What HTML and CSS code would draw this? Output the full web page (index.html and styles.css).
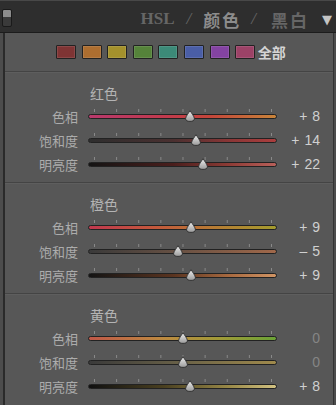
FILE: index.html
```html
<!DOCTYPE html>
<html lang="zh">

<head>
    <meta charset="UTF-8">
    <meta name="viewport" content="width=device-width, initial-scale=1.0">
    <title>HSL / 颜色 / 黑白</title>
    <link rel="stylesheet" href="styles.css">
</head>

<body>
    <div class="panel">
        <div class="header">
            <div class="toggle"></div>
            <div class="tabs">
                <span class="tab hsl">HSL</span>
                <span class="sep">/</span>
                <span class="tab active">颜色</span>
                <span class="sep sep-last">/</span>
                <span class="tab">黑白</span>
                <span class="arrow">▼</span>
            </div>
        </div>

        <div class="body">
            <div class="swatches">
                <span class="sw sw-red"></span>
                <span class="sw sw-orange"></span>
                <span class="sw sw-yellow"></span>
                <span class="sw sw-green"></span>
                <span class="sw sw-aqua"></span>
                <span class="sw sw-blue"></span>
                <span class="sw sw-purple"></span>
                <span class="sw sw-magenta"></span>
                <span class="all">全部</span>
            </div>

            <div class="section">
                <div class="title">红色</div>
                <div class="row">
                    <span class="label">色相</span>
                    <div class="slider"><div class="track red-hue"></div><svg class="thumb" style="left: 54%" viewBox="0 0 10 12"><use href="#thumb"/></svg></div>
                    <span class="value">+ 8</span>
                </div>
                <div class="row">
                    <span class="label">饱和度</span>
                    <div class="slider"><div class="track red-sat"></div><svg class="thumb" style="left: 57%" viewBox="0 0 10 12"><use href="#thumb"/></svg></div>
                    <span class="value">+ 14</span>
                </div>
                <div class="row">
                    <span class="label">明亮度</span>
                    <div class="slider"><div class="track red-lum"></div><svg class="thumb" style="left: 61%" viewBox="0 0 10 12"><use href="#thumb"/></svg></div>
                    <span class="value">+ 22</span>
                </div>
            </div>

            <div class="section">
                <div class="title">橙色</div>
                <div class="row">
                    <span class="label">色相</span>
                    <div class="slider"><div class="track orange-hue"></div><svg class="thumb" style="left: 54.5%" viewBox="0 0 10 12"><use href="#thumb"/></svg></div>
                    <span class="value">+ 9</span>
                </div>
                <div class="row">
                    <span class="label">饱和度</span>
                    <div class="slider"><div class="track orange-sat"></div><svg class="thumb" style="left: 47.5%" viewBox="0 0 10 12"><use href="#thumb"/></svg></div>
                    <span class="value">– 5</span>
                </div>
                <div class="row">
                    <span class="label">明亮度</span>
                    <div class="slider"><div class="track orange-lum"></div><svg class="thumb" style="left: 54.5%" viewBox="0 0 10 12"><use href="#thumb"/></svg></div>
                    <span class="value">+ 9</span>
                </div>
            </div>

            <div class="section">
                <div class="title">黄色</div>
                <div class="row">
                    <span class="label">色相</span>
                    <div class="slider"><div class="track yellow-hue"></div><svg class="thumb" style="left: 50%" viewBox="0 0 10 12"><use href="#thumb"/></svg></div>
                    <span class="value zero">0</span>
                </div>
                <div class="row">
                    <span class="label">饱和度</span>
                    <div class="slider"><div class="track yellow-sat"></div><svg class="thumb" style="left: 50%" viewBox="0 0 10 12"><use href="#thumb"/></svg></div>
                    <span class="value zero">0</span>
                </div>
                <div class="row">
                    <span class="label">明亮度</span>
                    <div class="slider"><div class="track yellow-lum"></div><svg class="thumb" style="left: 54%" viewBox="0 0 10 12"><use href="#thumb"/></svg></div>
                    <span class="value">+ 8</span>
                </div>
            </div>
        </div>
    </div>

    <!-- shared slider thumb -->
    <svg width="0" height="0" class="defs">
        <defs>
            <linearGradient id="thumb-fill" x1="0" y1="0" x2="0" y2="1">
                <stop offset="0" stop-color="#f0f0f0"/>
                <stop offset="1" stop-color="#9a9a9a"/>
            </linearGradient>
            <path id="thumb" d="M5 0.6 C6 2.5 9.4 6.5 9.4 8.6 C9.4 10.6 7.6 11.4 5 11.4 C2.4 11.4 0.6 10.6 0.6 8.6 C0.6 6.5 4 2.5 5 0.6 Z" fill="url(#thumb-fill)" stroke="#2a2a2a" stroke-width="0.9"/>
        </defs>
    </svg>
</body>

</html>
```

FILE: styles.css
```css
body {
    margin: 0;
    background: #4c4c4c;
    font-family: "Noto Sans CJK SC", "Liberation Sans", sans-serif;
}

.panel {
    width: 336px;
    height: 405px;
    overflow: hidden;
    background: #4c4c4c;
}

/* header */

.header {
    height: 31px;
    background: #2e2e2e;
    border-top: 1px solid #484848;
    border-bottom: 1px solid #1c1c1c;
    display: flex;
    align-items: center;
    padding: 0 4px 0 2px;
}

.toggle {
    width: 8px;
    height: 16px;
    border: 1px solid #1a1a1a;
    border-radius: 2px;
    background: linear-gradient(#8c8c8c 0 45%, #3a3a3a 45%);
    margin-top: 2px;
}

.tabs {
    margin-left: auto;
    display: flex;
    align-items: center;
    padding-top: 5px;
    color: #666;
    font-size: 17px;
}

.tab {
    letter-spacing: 2px;
    font-weight: bold;
}

.hsl {
    font-family: "Liberation Serif", serif;
    letter-spacing: 0;
}

.tab.active {
    color: #8c8c8c;
}

.sep {
    font-family: "Liberation Serif", serif;
    font-style: italic;
    margin: 0 12px;
}

.sep-last {
    margin: 0 15px 0 10px;
}

.arrow {
    color: #c4c4c4;
    font-size: 13px;
    margin-left: 13px;
    font-family: "DejaVu Sans", sans-serif;
}

/* body */

.body {
    height: 372px;
    margin-left: 3px;
    margin-right: 2px;
    background: #575757;
    border-left: 2px solid #2a2a2a;
    border-right: 1px solid #333;
}

.swatches {
    display: flex;
    align-items: center;
    gap: 5.6px;
    height: 14px;
    padding: 12px 0 12px 51px;
}

.sw {
    width: 18px;
    height: 12px;
    border: 1px solid #222;
    border-radius: 1px;
    box-shadow: inset 0 0 0 1px rgba(255, 255, 255, 0.1);
}

.sw-red { background: #7f3434; }
.sw-orange { background: #ad6e30; }
.sw-yellow { background: #a4912c; }
.sw-green { background: #55833a; }
.sw-aqua { background: #3c8a78; }
.sw-blue { background: #4a5ea6; }
.sw-purple { background: #8443a2; }
.sw-magenta { background: #9c4267; }

.all {
    margin-left: -3px;
    color: #d4d4d4;
    font-size: 14px;
    font-weight: bold;
    line-height: 14px;
}

/* sections */

.section {
    border-top: 1px solid #444;
    box-shadow: inset 0 1px #5e5e5e;
    padding: 10px 0 6px;
}

.title {
    height: 22px;
    line-height: 22px;
    padding-left: 85px;
    color: #b4b4b4;
    font-size: 14px;
}

.row {
    display: grid;
    grid-template-columns: 83px 189px 43px;
    height: 24px;
    align-items: center;
}

.label {
    text-align: right;
    padding-right: 10px;
    color: #acacac;
    font-size: 13px;
}

.value {
    text-align: right;
    color: #d0d0d0;
    font-family: "Liberation Sans", sans-serif;
    font-size: 14px;
    word-spacing: 1px;
}

.value.zero {
    color: #858585;
}

.slider {
    position: relative;
    height: 24px;
    display: flex;
    align-items: center;
}

.slider::before {
    content: "";
    position: absolute;
    left: 6px;
    top: 5px;
    width: 178px;
    height: 3px;
    background-image: linear-gradient(90deg, #8a8a8a 1px, transparent 1px);
    background-size: 22.125px 3px;
}

.track {
    flex: 1;
    height: 3px;
    border: 1px solid #222;
    border-radius: 3px;
}

.thumb {
    position: absolute;
    top: 6px;
    width: 10px;
    height: 12px;
    margin-left: -5px;
}

.defs {
    position: absolute;
}

.red-hue { background: linear-gradient(90deg, #b8396c, #c23a4e 40%, #c4463a 65%, #c8843a); }
.red-sat { background: linear-gradient(90deg, #2e2e2e, #4a3030 45%, #8a3636 75%, #aa3e3e); }
.red-lum { background: linear-gradient(90deg, #141414, #4a1e1c 45%, #8e3c36 75%, #b8605a); }
.orange-hue { background: linear-gradient(90deg, #c0384e, #c4583c 35%, #b87a34 65%, #a49c2e); }
.orange-sat { background: linear-gradient(90deg, #3a3a3a, #6a5244 50%, #a0684a); }
.orange-lum { background: linear-gradient(90deg, #141414, #5a3420 45%, #a86a40 75%, #d09464); }
.yellow-hue { background: linear-gradient(90deg, #c05848, #bc8a40 40%, #a09a38 70%, #6aa236); }
.yellow-sat { background: linear-gradient(90deg, #3a3a3a, #6a6248 50%, #a08a4c); }
.yellow-lum { background: linear-gradient(90deg, #101010, #4a4020 40%, #9a8a48 75%, #d2c282); }
```
